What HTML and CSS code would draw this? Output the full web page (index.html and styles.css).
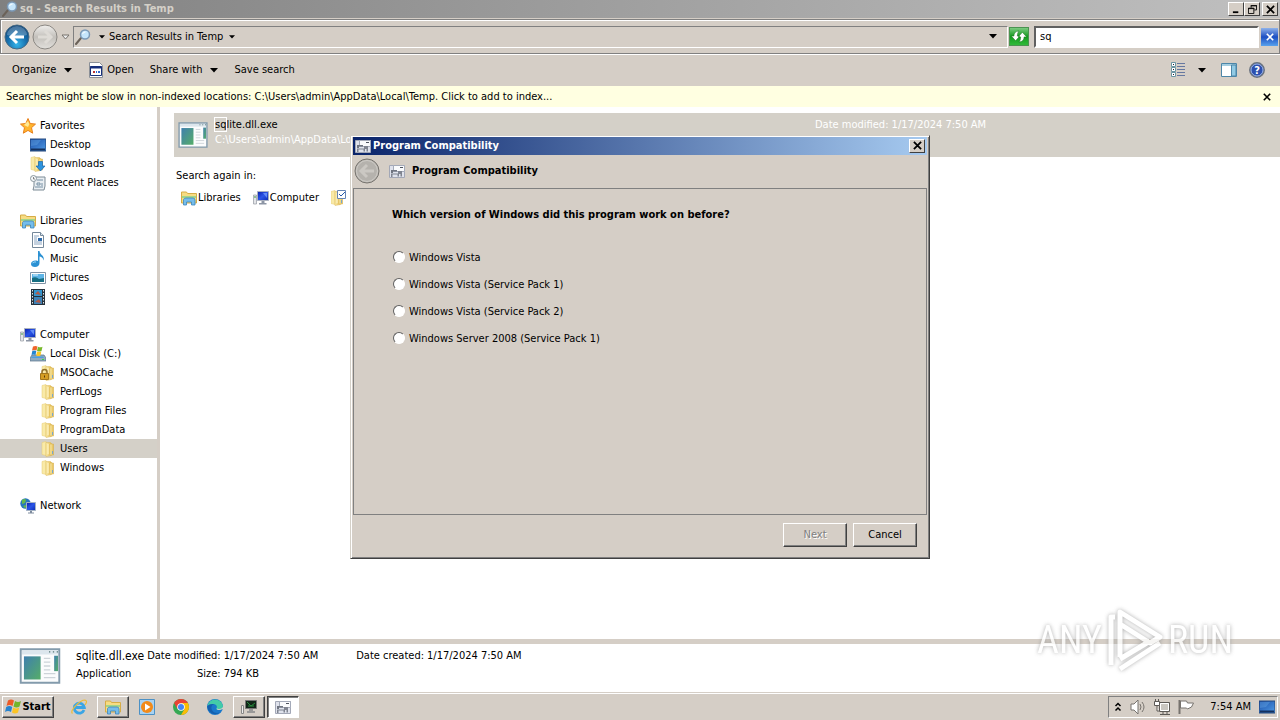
FILE: index.html
```
<!DOCTYPE html>
<html lang="en">
<head>
    <meta charset="UTF-8">
    <meta name="viewport" content="width=device-width, initial-scale=1.0">
    <title>sq - Search Results in Temp</title>
    <link rel="stylesheet" href="styles.css">
</head>
<body>
    <!-- shared icons -->
    <svg class="sprite" aria-hidden="true">
        <defs>
            <linearGradient id="gold" x1="0" x2="1"><stop offset="0" stop-color="#fbeeb0"/><stop offset="1" stop-color="#e3b94b"/></linearGradient>
            <linearGradient id="screen" x1="0" x2="1" y2="1"><stop offset="0" stop-color="#0a1fa8"/><stop offset=".5" stop-color="#2a55e8"/><stop offset="1" stop-color="#0b2bb0"/></linearGradient>
            <linearGradient id="desk" x1="0" x2="1" y2="1"><stop offset="0" stop-color="#1c4fa8"/><stop offset="1" stop-color="#4f9be6"/></linearGradient>
            <linearGradient id="teal" x1="0" y1="0" x2="1" y2="1"><stop offset="0" stop-color="#3f7fae"/><stop offset="1" stop-color="#55ad68"/></linearGradient>
            <radialGradient id="orb" cx=".5" cy=".8" r=".8"><stop offset="0" stop-color="#35b5ea"/><stop offset=".5" stop-color="#1770ae"/><stop offset="1" stop-color="#0c3f73"/></radialGradient>
            <linearGradient id="silver" x1="0" x2="0" y1="0" y2="1"><stop offset="0" stop-color="#f0efed"/><stop offset=".5" stop-color="#c3c0bb"/><stop offset="1" stop-color="#e2e0dc"/></linearGradient>
        </defs>
        <symbol id="lens" viewBox="0 0 16 16"><path d="M1 15l5-6" stroke="#6b6259" stroke-width="2" stroke-linecap="round"/><circle cx="10" cy="5.500" r="4.500" fill="#c5e5fb" stroke="#7b98b5" stroke-width="1.500"/><path d="M7.500 5a3 3 0 0 1 3-2" stroke="#fff" fill="none"/></symbol>
        <symbol id="folder" viewBox="0 0 16 16"><path d="M2 1.500l4-1v14l-4-1z" fill="#f9eaa8" stroke="#e6cb72" stroke-width=".5"/><path d="M6 1.500h4.500l1 1v12l-5.500 1z" fill="url(#gold)" stroke="#dcb95a" stroke-width=".5"/><path d="M10 3h3.500v11H10z" fill="url(#gold)" stroke="#d5ae4a" stroke-width=".5"/><path d="M8 3v10" stroke="#fff6cc"/><path d="M12.500 10v3" stroke="#7aa7c9"/></symbol>
        <symbol id="star" viewBox="0 0 16 16"><path d="M8 .5l2.200 5 5.300.6-4 3.600 1.200 5.500L8 12.400l-4.700 2.800 1.200-5.500-4-3.600 5.300-.6z" fill="#ffb52e" stroke="#e8801c"/><path d="M8 3l1.300 3.200L8 9 4 7z" fill="#ffe995"/></symbol>
        <symbol id="desktop" viewBox="0 0 16 16"><path d="M0 2h16v12H0z" fill="url(#desk)" stroke="#24497c"/><path d="M1 12.500h14" stroke="#15315e" stroke-width="2"/><path d="M5 3h6L7 8 1 9V3z" fill="#6fb4ee" opacity=".35"/></symbol>
        <symbol id="downloads" viewBox="0 0 16 16"><use href="#folder" x="-1"/><path d="M8.500 5.500h4V10H15l-4.500 5L6 10h2.500z" fill="#2c93df" stroke="#1765ac" stroke-width=".7"/></symbol>
        <symbol id="recent" viewBox="0 0 16 16"><path d="M4 2h11v9l-1 4H3l1-4z" fill="#e9eef2" stroke="#7d8b96"/><path d="M7 5h6M7 8h3v2H7zM12 8v3M5 12h8" stroke="#7690a4" fill="none"/><circle cx="3.500" cy="3.500" r="3" fill="#f5f8fa" stroke="#8b969e"/><path d="M3.500 2v2H5" stroke="#555" fill="none" stroke-width=".7"/></symbol>
        <symbol id="libraries" viewBox="0 0 16 16"><path d="M.5 2h5l1 1.500h9V13H.5z" fill="#f6dc83" stroke="#d6ac46"/><path d="M1 6h14v2H1z" fill="#a3d58a"/><path d="M2.500 15V9.500Q3 8 5 8h7q2 0 2 2v5h-3.500v-3h-5v3z" fill="#75bdeb" stroke="#3d86bd" stroke-width=".8"/></symbol>
        <symbol id="document" viewBox="0 0 16 16"><path d="M2.500.5h8l3 3v12h-11z" fill="#fff" stroke="#75889a"/><path d="M10.500.5v3h3" fill="#dce5ee" stroke="#75889a"/><path d="M4 4h5M4 6h3M4 8h3M4 10h8M4 12h8" stroke="#8aa4c0"/><path d="M8 6h4v3H8z" fill="#2f6bab"/></symbol>
        <symbol id="music" viewBox="0 0 16 16"><path d="M8 0h1.500c0 4 5.500 4 4 9.500-.5-3-2.500-4-4-4v6.500c0 2.500-2 4-4.500 4s-4-1-4-3 2-3.500 4.500-3.500c1.500 0 2.500.5 2.500.5z" fill="#2b91d3"/><path d="M2.500 12q1.500-1.500 3.500-1" stroke="#9bd8f7" fill="none"/></symbol>
        <symbol id="pictures" viewBox="0 0 16 16"><path d="M.5 2.500h15v11H.5z" fill="#fff" stroke="#8294a6"/><path d="M2 4h12v8H2z" fill="#5db4e6"/><path d="M2 8q4-2 7 1l5-1v4H2z" fill="#176f83"/><path d="M3 5h5" stroke="#dff4ff"/></symbol>
        <symbol id="video" viewBox="0 0 16 16"><path d="M1 0h14v16H1z" fill="#26313b"/><path d="M4 1h8v6H4z" fill="#3295cf"/><path d="M4 8h8v7H4z" fill="#3e83b8"/><path d="M5 5l3-3 3 4zM5 13l4-3 2 4z" fill="#b15a48"/><path d="M2.500 1v15M13.500 1v15" stroke="#dce6ea" stroke-dasharray="1.500 1.500"/></symbol>
        <symbol id="computer" viewBox="0 0 16 16"><path d="M.5 5h3v9h-3z" fill="#e3e5e8" stroke="#9499a2" stroke-width=".7"/><path d="M1 7h2" stroke="#3b9b3e"/><path d="M4.500 1.500h11v9h-11z" fill="url(#screen)" stroke="#aab1bf"/><path d="M8.500 11h3v2h2v1.500H6V13h2.500z" fill="#8d96a5"/><path d="M10 3l4 5V3z" fill="#7ba5ff" opacity=".7"/></symbol>
        <symbol id="disk" viewBox="0 0 16 16"><path d="M2 9h12l2 3v3H0v-3z" fill="#91abc0" stroke="#577086" stroke-width=".7"/><path d="M2 10.500h11l1 1.500H1z" fill="#4d9ede"/><path d="M12 13.500h2" stroke="#38d248"/><path d="M3 .5q2.500-1 4.500 0L6.500 4.500q-2-1-4.500 0z" fill="#ee652b"/><path d="M8 .8q2 1 4.500 0L11.500 5q-2 1-4.500 0z" fill="#77b82a"/><path d="M2.300 5q2-1 4 0L5.500 9q-2-1-4 0z" fill="#2585d0"/><path d="M7 5.500q2 1 4.300 0L10.500 9.500q-2 1-4.300 0z" fill="#fac826"/></symbol>
        <symbol id="locked" viewBox="0 0 16 16"><use href="#folder"/><path d="M2 9V7q0-2.500 2.500-2.500T7 7v2" fill="none" stroke="#92702a" stroke-width="1.500"/><path d="M.5 8.500h8v6h-8z" fill="#d49d23" stroke="#a3761c"/><path d="M4.500 10.500v2" stroke="#56380a"/></symbol>
        <symbol id="network" viewBox="0 0 16 16"><circle cx="5.500" cy="5.500" r="5.200" fill="#2877bd"/><path d="M2 2q3-2 4 0L5 5 2 6zM3 8l3-1 1 2-2 1z" fill="#63b94a"/><path d="M6.500 4.500h9v8h-9z" fill="url(#screen)" stroke="#a4b2c4"/><path d="M10 13h2v1.500h2v1H8v-1h2z" fill="#7e8b9d"/></symbol>
        <symbol id="compat" viewBox="0 0 16 16"><path d="M.5 2.500h15v12H.5z" fill="#dfe2ec" stroke="#a2a7b6"/><path d="M4.500 2.500h11v6h-11z" fill="#fafbfd" stroke="#a4aab9"/><path d="M11 4.500h3" stroke="#4d535f"/><path d="M2 7h6v1.500H4V10H2z" fill="#6f7480"/><path d="M2 10.500h7v1H3.500V14H2zM9 8h4v5.500h-1.500V11H10v2.500H8.500V11H9z" fill="#7f8490"/></symbol>
        <symbol id="app" viewBox="0 0 32 28"><path d="M1 1h30v26H1z" fill="#fbfcfd" stroke="#839bac" stroke-width="1.500"/><path d="M2 2h28v3H2z" fill="#dce6ed"/><path d="M23 3h1M26 3h1M29 3h1" stroke="#577"/><path d="M3.500 6.500h13v18h-13z" fill="url(#teal)"/><path d="M19 8h5M19 11h5M19 14h5M19 17h5M19 20h9M19 23h9" stroke="#cdd4d9"/><path d="M27 6h3v12h-3z" fill="url(#teal)"/></symbol>
        <symbol id="arrow" viewBox="0 0 8 5"><path d="M0 0h8L4 4.500z" fill="currentColor"/></symbol>
        <symbol id="cross" viewBox="0 0 10 10"><path d="M1 1l8 8M9 1L1 9" stroke="currentColor" stroke-width="2"/></symbol>
        <symbol id="left" viewBox="0 0 26 26"><path d="M13 7l-6 6 6 6M8 13h12" fill="none" stroke="currentColor" stroke-width="3"/></symbol>
    </svg>

    <div class="workspace">
        <header class="titlebar inactive">
            <svg class="icon"><use href="#lens"/></svg>
            <h1>sq - Search Results in Temp</h1>
            <div class="window-buttons">
                <button aria-label="Minimize"><svg viewBox="0 0 10 10"><path d="M1 8h6" stroke="#000" stroke-width="2"/></svg></button>
                <button aria-label="Restore"><svg viewBox="0 0 10 10"><path d="M3.500 3V.5h6v5H7M3 1h7M.5 3.500h6v6h-6zM0 4h7" fill="none" stroke="#000"/></svg></button>
                <button class="close" aria-label="Close"><svg viewBox="0 0 10 10"><use href="#cross"/></svg></button>
            </div>
        </header>

        <nav class="navbar">
            <button class="orb" aria-label="Back"><svg viewBox="0 0 26 26"><circle cx="13" cy="13" r="12" fill="url(#orb)" stroke="#496b83"/><path d="M3 11a10 9 0 0 1 20 0q-10 3-20 0z" fill="#fff" opacity=".25"/><use href="#left" color="#fff"/></svg></button>
            <button class="orb" aria-label="Forward"><svg viewBox="0 0 26 26"><circle cx="13" cy="13" r="12" fill="url(#silver)" stroke="#8b8883"/><path d="M13 7l6 6-6 6M18 13H6" fill="none" stroke="#dedbd6" stroke-width="3"/></svg></button>
            <button class="history" aria-label="Recent pages"><svg viewBox="0 0 9 6"><path d="M1 1h7L4.500 5z" fill="#eee" stroke="#77736d"/></svg></button>
            <div class="address">
                <svg class="icon"><use href="#lens"/></svg>
                <button class="crumb" aria-label="Locations"><svg class="small-arrow"><use href="#arrow"/></svg></button>
                <button class="crumb">Search Results in Temp <svg class="small-arrow"><use href="#arrow"/></svg></button>
                <button class="crumb drop" aria-label="Previous locations"><svg class="arrow"><use href="#arrow"/></svg></button>
            </div>
            <button class="refresh" aria-label="Refresh"><svg viewBox="0 0 20 20"><path d="M6 15L1 9.500h3Q4 4 10 3.500 8 5.500 8 9.500h3zM14 5l5 5.500h-3q0 5.500-6 6 2-2 2-6H9z" fill="#fff" stroke="#16701b" stroke-width=".6"/></svg></button>
            <input class="search" type="text" value="sq" aria-label="Search">
            <button class="clear" aria-label="Clear search"><svg viewBox="0 0 10 10"><use href="#cross"/></svg></button>
        </nav>

        <div class="toolbar">
            <button>Organize <svg class="arrow"><use href="#arrow"/></svg></button>
            <button class="open"><svg class="icon" viewBox="0 0 16 16"><path d="M1.500.5h10l3 3v12h-13z" fill="#fff" stroke="#8b9097"/><path d="M2.500 4.500h11v9h-11z" fill="#fff" stroke="#172f7a"/><path d="M2 5.500h12" stroke="#172f7a" stroke-width="2"/><path d="M5 9h2v2H5z" fill="#b33"/><path d="M8 9h1v2H8zM10 9h2v2h-2z" fill="#36c"/></svg>Open</button>
            <button>Share with <svg class="arrow"><use href="#arrow"/></svg></button>
            <button>Save search</button>
            <div class="view-buttons">
                <button aria-label="Change view"><svg class="icon" viewBox="0 0 16 16"><path d="M1.500.5h4v4h-4zM1.500 5.500h4v4h-4zM1.500 10.500h4v4h-4z" fill="#fff" stroke="#6b96a4"/><path d="M3 2.500h1M3 7.500h1M3 12.500h1" stroke="#223"/><path d="M7 1.500h8M7 4.500h8M7 7.500h8M7 10.500h8M7 13.500h8" stroke="#6678a0"/></svg></button>
                <button aria-label="More views"><svg class="arrow"><use href="#arrow"/></svg></button>
                <button class="preview" aria-label="Preview pane"><svg class="icon" viewBox="0 0 16 16"><path d="M.5 1.500h15v13H.5z" fill="#fff" stroke="#4c86a8"/><path d="M1 2h14v2H1z" fill="#a4cde0"/><path d="M10.500 3v11H15V3z" fill="#91cbe5" stroke="#4c86a8"/></svg></button>
                <button aria-label="Help"><svg class="icon" viewBox="0 0 16 16"><circle cx="8" cy="8" r="7.200" fill="#2d50ae" stroke="#69727e" stroke-width="1.500"/><circle cx="8" cy="8" r="6" fill="none" stroke="#b8cdf5" stroke-width=".8"/><text class="help-mark" x="8" y="12">?</text></svg></button>
            </div>
        </div>

        <div class="notice">
            <span>Searches might be slow in non-indexed locations: C:\Users\admin\AppData\Local\Temp. Click to add to index...</span>
            <button aria-label="Dismiss"><svg viewBox="0 0 10 10"><use href="#cross"/></svg></button>
        </div>

        <div class="content">
            <aside class="sidebar">
                <ul>
                    <li><a href="#"><svg class="icon"><use href="#star"/></svg>Favorites</a></li>
                    <li class="level-2"><a href="#"><svg class="icon"><use href="#desktop"/></svg>Desktop</a></li>
                    <li class="level-2"><a href="#"><svg class="icon"><use href="#downloads"/></svg>Downloads</a></li>
                    <li class="level-2"><a href="#"><svg class="icon"><use href="#recent"/></svg>Recent Places</a></li>
                </ul>
                <ul>
                    <li><a href="#"><svg class="icon"><use href="#libraries"/></svg>Libraries</a></li>
                    <li class="level-2"><a href="#"><svg class="icon"><use href="#document"/></svg>Documents</a></li>
                    <li class="level-2"><a href="#"><svg class="icon"><use href="#music"/></svg>Music</a></li>
                    <li class="level-2"><a href="#"><svg class="icon"><use href="#pictures"/></svg>Pictures</a></li>
                    <li class="level-2"><a href="#"><svg class="icon"><use href="#video"/></svg>Videos</a></li>
                </ul>
                <ul>
                    <li><a href="#"><svg class="icon"><use href="#computer"/></svg>Computer</a></li>
                    <li class="level-2"><a href="#"><svg class="icon"><use href="#disk"/></svg>Local Disk (C:)</a></li>
                    <li class="level-3"><a href="#"><svg class="icon"><use href="#locked"/></svg>MSOCache</a></li>
                    <li class="level-3"><a href="#"><svg class="icon"><use href="#folder"/></svg>PerfLogs</a></li>
                    <li class="level-3"><a href="#"><svg class="icon"><use href="#folder"/></svg>Program Files</a></li>
                    <li class="level-3"><a href="#"><svg class="icon"><use href="#folder"/></svg>ProgramData</a></li>
                    <li class="level-3 selected"><a href="#"><svg class="icon"><use href="#folder"/></svg>Users</a></li>
                    <li class="level-3"><a href="#"><svg class="icon"><use href="#folder"/></svg>Windows</a></li>
                </ul>
                <ul>
                    <li><a href="#"><svg class="icon"><use href="#network"/></svg>Network</a></li>
                </ul>
            </aside>

            <main class="results">
                <div class="result">
                    <svg class="app-icon"><use href="#app"/></svg>
                    <div class="result-name">
                        <div><mark>sq</mark>lite.dll.exe</div>
                        <div class="path">C:\Users\admin\AppData\Lo</div>
                    </div>
                    <div class="result-date">Date modified: 1/17/2024 7:50 AM</div>
                </div>
                <p>Search again in:</p>
                <div class="again">
                    <a href="#"><svg class="icon"><use href="#libraries"/></svg>Libraries</a>
                    <a href="#"><svg class="icon"><use href="#computer"/></svg>Computer</a>
                    <a href="#" aria-label="Custom"><svg class="icon" viewBox="0 0 16 16"><use href="#folder" x="-2"/><path d="M6.500.5h8v8h-8z" fill="#fff" stroke="#6685b5"/><path d="M8 4l2 2 4-4" fill="none" stroke="#2557a8"/></svg></a>
                </div>
            </main>
        </div>

        <footer class="details">
            <svg class="details-icon"><use href="#app"/></svg>
            <div class="details-name"><strong>sqlite.dll.exe</strong><span>Application</span></div>
            <dl>
                <dt>Date modified:</dt><dd>1/17/2024 7:50 AM</dd>
                <dt>Size:</dt><dd>794 KB</dd>
            </dl>
            <dl>
                <dt>Date created:</dt><dd>1/17/2024 7:50 AM</dd>
            </dl>
        </footer>

        <div class="dialog-layer">
            <form class="dialog" role="dialog" aria-label="Program Compatibility">
                <div class="titlebar">
                    <svg class="icon"><use href="#compat"/></svg>
                    <h2>Program Compatibility</h2>
                    <div class="window-buttons">
                        <button type="button" aria-label="Close"><svg viewBox="0 0 10 10"><use href="#cross"/></svg></button>
                    </div>
                </div>
                <div class="dialog-head">
                    <button class="orb" type="button" aria-label="Back" disabled><svg viewBox="0 0 26 26"><circle cx="13" cy="13" r="12" fill="#b5b2ad" stroke="#77746f"/><circle cx="13" cy="13" r="10.500" fill="none" stroke="#cecbc6"/><use href="#left" color="#cbc8c3"/></svg></button>
                    <svg class="icon"><use href="#compat"/></svg>
                    <h3>Program Compatibility</h3>
                </div>
                <fieldset class="dialog-body">
                    <legend>Which version of Windows did this program work on before?</legend>
                    <label><input type="radio" name="version">Windows Vista</label>
                    <label><input type="radio" name="version">Windows Vista (Service Pack 1)</label>
                    <label><input type="radio" name="version">Windows Vista (Service Pack 2)</label>
                    <label><input type="radio" name="version">Windows Server 2008 (Service Pack 1)</label>
                </fieldset>
                <div class="dialog-actions">
                    <button type="button" disabled>Next</button>
                    <button type="button">Cancel</button>
                </div>
            </form>
        </div>

        <div class="watermark">
            <span>ANY</span>
            <svg viewBox="0 0 58 66"><path d="M9 10H5v48M14 50V5l40 25-10 6L14 17M14 52l30-18M14 62l40-26" fill="none" stroke="#fff" stroke-width="5" stroke-linejoin="round"/></svg>
            <span>RUN</span>
        </div>
    </div>

    <div class="taskbar">
        <button class="start"><svg viewBox="0 0 16 16"><path d="M3 1.500q3-2 6 0L7.500 7q-3-2-6 0z" fill="#ed5b27"/><path d="M10 2q3 2 6 0L14.500 7.500q-3 2-6 0z" fill="#73b52b"/><path d="M1.200 8q3-2 6 0L6 13q-3-2-6 0z" fill="#2784cf"/><path d="M8.200 8.500q3 2 6 0L13 13.500q-3 2-6 0z" fill="#fbc425"/></svg>Start</button>
        <button class="task" aria-label="Internet Explorer"><svg viewBox="0 0 16 16"><path d="M13 11A5 5 0 1 1 13.300 8.500H4" fill="none" stroke="#3aa5e5" stroke-width="2.800"/><path d="M1.500 14.500C-2 12 9 1 14 1q3 1 0 5" fill="none" stroke="#edbc38" stroke-width="1.200"/></svg></button>
        <button class="task raised" aria-label="Explorer"><svg><use href="#libraries"/></svg></button>
        <button class="task" aria-label="Media Player"><svg viewBox="0 0 16 16"><path d="M.5.5h15v15H.5z" fill="#a8d2f2" stroke="#4c91c5"/><circle cx="8" cy="8" r="6" fill="#f28a19"/><path d="M6 4.500l5.500 3.500L6 11.500z" fill="#fff"/></svg></button>
        <button class="task" aria-label="Chrome"><svg viewBox="0 0 16 16"><circle cx="8" cy="8" r="8" fill="#35a853"/><path d="M1.100 4A8 8 0 0 1 14.900 4H8L4.500 10z" fill="#e94335"/><path d="M14.900 4A8 8 0 0 1 8 16l3.500-6L8 4z" fill="#fbbc05"/><circle cx="8" cy="8" r="3.800" fill="#fff"/><circle cx="8" cy="8" r="3" fill="#4285f4"/></svg></button>
        <button class="task" aria-label="Edge"><svg viewBox="0 0 16 16"><circle cx="8" cy="8" r="8" fill="#1a78cb"/><path d="M.3 7A8 8 0 0 1 16 7q0 4-5 4-2 0-1.500-1.500Q11 6 7 5 3 4.500.3 7z" fill="#43cba8"/><path d="M.3 7Q3 4.500 7 5 3 7 5 11q2 4 8 2.500A8 8 0 0 1 .3 7z" fill="#1460ae"/><path d="M9.500 9.500Q10 12 16 10V8q-2 3-6 1.500z" fill="#d5d0c9"/></svg></button>
        <button class="task raised" aria-label="Command window"><svg viewBox="0 0 16 16"><path d="M.5 6.500h2v8h-2z" fill="#eee" stroke="#888"/><path d="M4.500 1.500h11v8h-11z" fill="#102518" stroke="#777"/><path d="M6 3l4 4 4-3M7 7h6" stroke="#278b3c" fill="none"/><path d="M8 10h4v2h2v2H6v-2h2z" fill="#999"/></svg></button>
        <button class="task pressed" aria-label="Program Compatibility"><svg><use href="#compat"/></svg></button>
        <div class="tray">
            <button aria-label="Show hidden icons"><svg class="chevrons" viewBox="0 0 8 10"><path d="M1.500 4L4 1.500 6.500 4M1.500 8.500L4 6l2.500 2.500" fill="none" stroke="#000" stroke-width="1.500"/></svg></button>
            <svg class="icon" viewBox="0 0 16 16"><path d="M1 5h3l4-4v14l-4-4H1z" fill="#fff" stroke="#77736e"/><path d="M10 5q2 3 0 6M12 3q4 5 0 10" fill="none" stroke="#77736e"/></svg>
            <svg class="icon" viewBox="0 0 16 16"><path d="M5.500 3.500h10v9h-10z" fill="#c9c6c0" stroke="#5c5955"/><path d="M6.500 4.500h8v7h-8z" fill="none" stroke="#fff"/><path d="M9 13v2M13 13v2M6 15.500h10" stroke="#5c5955"/><path d="M.5 2.500h5v4h-5zM1.500 0v2M4.500 0v2M3 7v5h2" fill="#fff" stroke="#5c5955"/></svg>
            <svg class="icon flag" viewBox="0 0 16 16"><path d="M1.500 1v14" stroke="#77736e" stroke-width="2"/><path d="M2.500 2h6l1 2h6l-2 4-4 2-1-1h-6z" fill="#fff" stroke="#77736e"/></svg>
            <time>7:54 AM</time>
            <button aria-label="Show desktop"><svg class="icon"><use href="#desktop"/></svg></button>
        </div>
    </div>
</body>
</html>
```
FILE: styles.css
```
* {
    box-sizing: border-box;
}
body {
    display: flex;
    flex-direction: column;
    height: 100vh;
    margin: 0;
    background: #d5cec6;
    color: #000;
    font-family: Tahoma, "DejaVu Sans Condensed", "DejaVu Sans", sans-serif;
    font-size: 11px;
    line-height: 16px;
    white-space: nowrap;
    overflow: hidden;
}
h1, h2, h3, p, ul, dl, dd {
    margin: 0;
    padding: 0;
    font-size: 11px;
}
ul {
    list-style: none;
}
a {
    color: inherit;
    text-decoration: none;
}
svg {
    display: block;
    flex: none;
}
button {
    display: flex;
    align-items: center;
    justify-content: center;
    padding: 0;
    border: none;
    background: none;
    color: inherit;
    font: inherit;
}
.sprite {
    position: absolute;
    width: 0;
    height: 0;
}
.icon {
    width: 16px;
    height: 16px;
}
.arrow {
    width: 8px;
    height: 5px;
}
.small-arrow {
    width: 6px;
    height: 4px;
}
.workspace {
    position: relative;
    display: flex;
    flex-direction: column;
    flex: 1;
    min-height: 0;
}

/* title bars */
.titlebar {
    display: flex;
    align-items: center;
    gap: 2px;
    height: 18px;
    padding: 0 2px;
    background: linear-gradient(to right, #0a246a, #a6caf0);
    color: #fff;
}
.titlebar.inactive {
    background: linear-gradient(to right, #808080, #c0c0c0);
    color: #d4d0c8;
}
.window-buttons {
    display: flex;
    margin-left: auto;
}
.window-buttons button {
    width: 16px;
    height: 14px;
    border: 1px solid;
    border-color: #fff #404040 #404040 #fff;
    background: #d5cec6;
    color: #000;
}
.window-buttons svg {
    width: 9px;
    height: 9px;
}
.window-buttons .close {
    margin-left: 2px;
}

/* navigation */
.navbar {
    display: flex;
    align-items: center;
    height: 35px;
    margin-top: 1px;
    padding: 0 1px 0 3px;
    border: 1px solid #808080;
    box-shadow: inset 1px 1px #fff, 0 1px #fff;
}
.orb svg {
    width: 26px;
    height: 26px;
}
.orb + .orb {
    margin-left: 2px;
}
.history {
    width: 15px;
}
.history svg {
    width: 9px;
    height: 6px;
}
.address {
    display: flex;
    flex: 1;
    align-items: center;
    height: 22px;
    padding-left: 1px;
    border: 1px solid;
    border-color: #808080 #fff #fff #808080;
}
.crumb {
    gap: 6px;
    height: 100%;
    margin-left: 8px;
}
.crumb + .crumb {
    margin-left: 4px;
}
.crumb.drop {
    margin-left: auto;
    padding-right: 10px;
}
.refresh {
    width: 20px;
    height: 19px;
    margin: 0 5px 0 1px;
    border: 1px solid #4b9351;
    background: linear-gradient(#7cca80, #159b1e 50%, #31b93a);
}
.refresh svg {
    width: 18px;
    height: 17px;
}
.search {
    width: 225px;
    height: 22px;
    padding: 0 4px;
    border: 2px solid;
    border-color: #606060 #fff #fff #606060;
    background: #fff;
    font: inherit;
}
.clear {
    width: 17px;
    height: 18px;
    margin-left: 2px;
    background: linear-gradient(#8fb2ea, #1d4fc2 50%, #58a2ed);
    color: #fff;
}
.clear svg {
    width: 8px;
    height: 8px;
}
.toolbar {
    display: flex;
    align-items: center;
    height: 32px;
    padding: 0 15px 0 12px;
}
.toolbar button {
    gap: 8px;
    margin-right: 16px;
}
.toolbar .open {
    gap: 3px;
}
.view-buttons {
    display: flex;
    margin-left: auto;
}
.toolbar .view-buttons button {
    margin-right: 0;
    margin-left: 12px;
}
.toolbar .view-buttons .preview {
    margin-left: 15px;
}
.help-mark {
    fill: #fff;
    font-size: 11px;
    font-weight: bold;
    text-anchor: middle;
}
.notice {
    display: flex;
    align-items: center;
    justify-content: space-between;
    height: 21px;
    padding: 0 9px 0 6px;
    background: #ffffe1;
}
.notice svg {
    width: 8px;
    height: 8px;
}

/* explorer content */
.content {
    display: flex;
    flex: 1;
    min-height: 0;
    background: #fff;
}
.sidebar {
    width: 160px;
    padding-top: 9px;
    border-right: 3px solid #d5cec6;
}
.sidebar ul {
    margin-bottom: 19px;
}
.sidebar a {
    display: flex;
    align-items: center;
    gap: 4px;
    height: 19px;
    padding-left: 20px;
}
.sidebar .level-2 a {
    padding-left: 30px;
}
.sidebar .level-3 a {
    padding-left: 40px;
}
.sidebar .selected {
    background: #d4d0c8;
}
.results {
    flex: 1;
    min-width: 0;
    padding: 6px 0 0 14px;
}
.result {
    display: flex;
    align-items: flex-start;
    height: 44px;
    margin-bottom: 11px;
    padding: 4px;
    background: #d4d0c8;
    line-height: 15px;
}
.app-icon {
    width: 30px;
    height: 26px;
    margin-top: 5px;
}
.result-name {
    width: 600px;
    margin-left: 7px;
}
.result mark {
    outline: 1px solid #fff;
    background: none;
}
.path, .result-date {
    color: #fff;
}
.results p {
    padding-left: 2px;
}
.again {
    display: flex;
    gap: 12px;
    margin-top: 6px;
    padding-left: 7px;
}
.again a {
    display: flex;
    align-items: center;
    gap: 1px;
}
.details {
    display: flex;
    height: 54px;
    padding: 3px 19px;
    border-top: 5px solid #d5cec6;
    border-bottom: 1px solid #d5cec6;
    background: #fff;
    line-height: 18px;
}
.details-icon {
    width: 42px;
    height: 36px;
    margin-top: 1px;
}
.details-name {
    display: flex;
    flex-direction: column;
    margin-left: 15px;
}
.details-name strong {
    font-size: 12px;
    font-weight: normal;
}
.details dl {
    display: grid;
    grid-template-columns: auto auto;
    grid-auto-rows: 18px;
    column-gap: 3px;
    margin-left: 3px;
}
.details dl + dl {
    margin-left: 38px;
}
.details dt {
    text-align: right;
}

/* compatibility dialog */
.dialog-layer {
    position: absolute;
    inset: 0;
    display: flex;
    align-items: center;
    justify-content: center;
}
.dialog {
    width: 580px;
    padding: 1px;
    border: 1px solid;
    border-color: #d4d0c8 #404040 #404040 #d4d0c8;
    background: #d5cec6;
    box-shadow: inset 1px 1px #fff, inset -1px -1px #808080;
}
.dialog .titlebar {
    margin: 0 1px;
}
.dialog-head {
    display: flex;
    align-items: center;
    height: 33px;
    padding-left: 2px;
}
.dialog-head .icon {
    margin: 0 7px 0 9px;
}
.dialog-body {
    display: flex;
    flex-direction: column;
    gap: 11px;
    min-height: 327px;
    margin: 0 1px;
    padding: 18px 38px;
    border: 1px solid #808080;
}
.dialog-body legend {
    float: left;
    margin-bottom: 16px;
    padding: 0;
    font-weight: bold;
}
.dialog-body label {
    display: flex;
    align-items: center;
    gap: 4px;
}
.dialog-body input {
    width: 12px;
    height: 12px;
    margin: 0 0 2px 1px;
    border: 1px solid;
    border-color: #606060 #fff #fff #606060;
    border-radius: 50%;
    background: #fff;
    appearance: none;
}
.dialog-actions {
    display: flex;
    justify-content: flex-end;
    gap: 6px;
    padding: 8px 11px 10px;
}
.dialog-actions button {
    width: 64px;
    height: 24px;
    border: 1px solid;
    border-color: #fff #404040 #404040 #fff;
    box-shadow: inset -1px -1px #808080;
}
.dialog-actions button:disabled {
    color: #808080;
    text-shadow: 1px 1px #fff;
}
.watermark {
    position: absolute;
    right: 47px;
    bottom: 20px;
    display: flex;
    align-items: center;
    gap: 4px;
    color: #fff;
    font-family: "Liberation Sans Narrow", "Roboto Condensed", "Liberation Sans", sans-serif;
    font-size: 38px;
    line-height: 40px;
    filter: drop-shadow(0 0 2px #999);
    opacity: .8;
    pointer-events: none;
}
.watermark svg {
    width: 58px;
    height: 66px;
}

/* taskbar */
.taskbar {
    display: flex;
    align-items: center;
    height: 27px;
    padding: 2px;
    border-top: 1px solid #fff;
    background: #d5cec6;
}
.start {
    gap: 1px;
    width: 52px;
    height: 22px;
    margin-right: 9px;
    border: 1px solid;
    border-color: #fff #404040 #404040 #fff;
    box-shadow: inset -1px -1px #808080;
    font-weight: bold;
}
.start svg {
    width: 16px;
    height: 16px;
}
.task {
    width: 32px;
    height: 22px;
    margin-right: 2px;
    border: 1px solid transparent;
}
.task svg {
    width: 16px;
    height: 16px;
}
.task.raised {
    border-color: #fff #404040 #404040 #fff;
    box-shadow: inset -1px -1px #808080;
}
.task.pressed {
    border-color: #404040 #fff #fff #404040;
    background: #fff;
    box-shadow: inset 1px 1px #808080;
}
.tray {
    display: flex;
    align-items: center;
    gap: 8px;
    height: 22px;
    margin-left: auto;
    padding: 0 2px 0 5px;
    border: 1px solid;
    border-color: #808080 #fff #fff #808080;
}
.chevrons {
    width: 8px;
    height: 10px;
}
.tray .flag {
    margin-right: 8px;
}
```
